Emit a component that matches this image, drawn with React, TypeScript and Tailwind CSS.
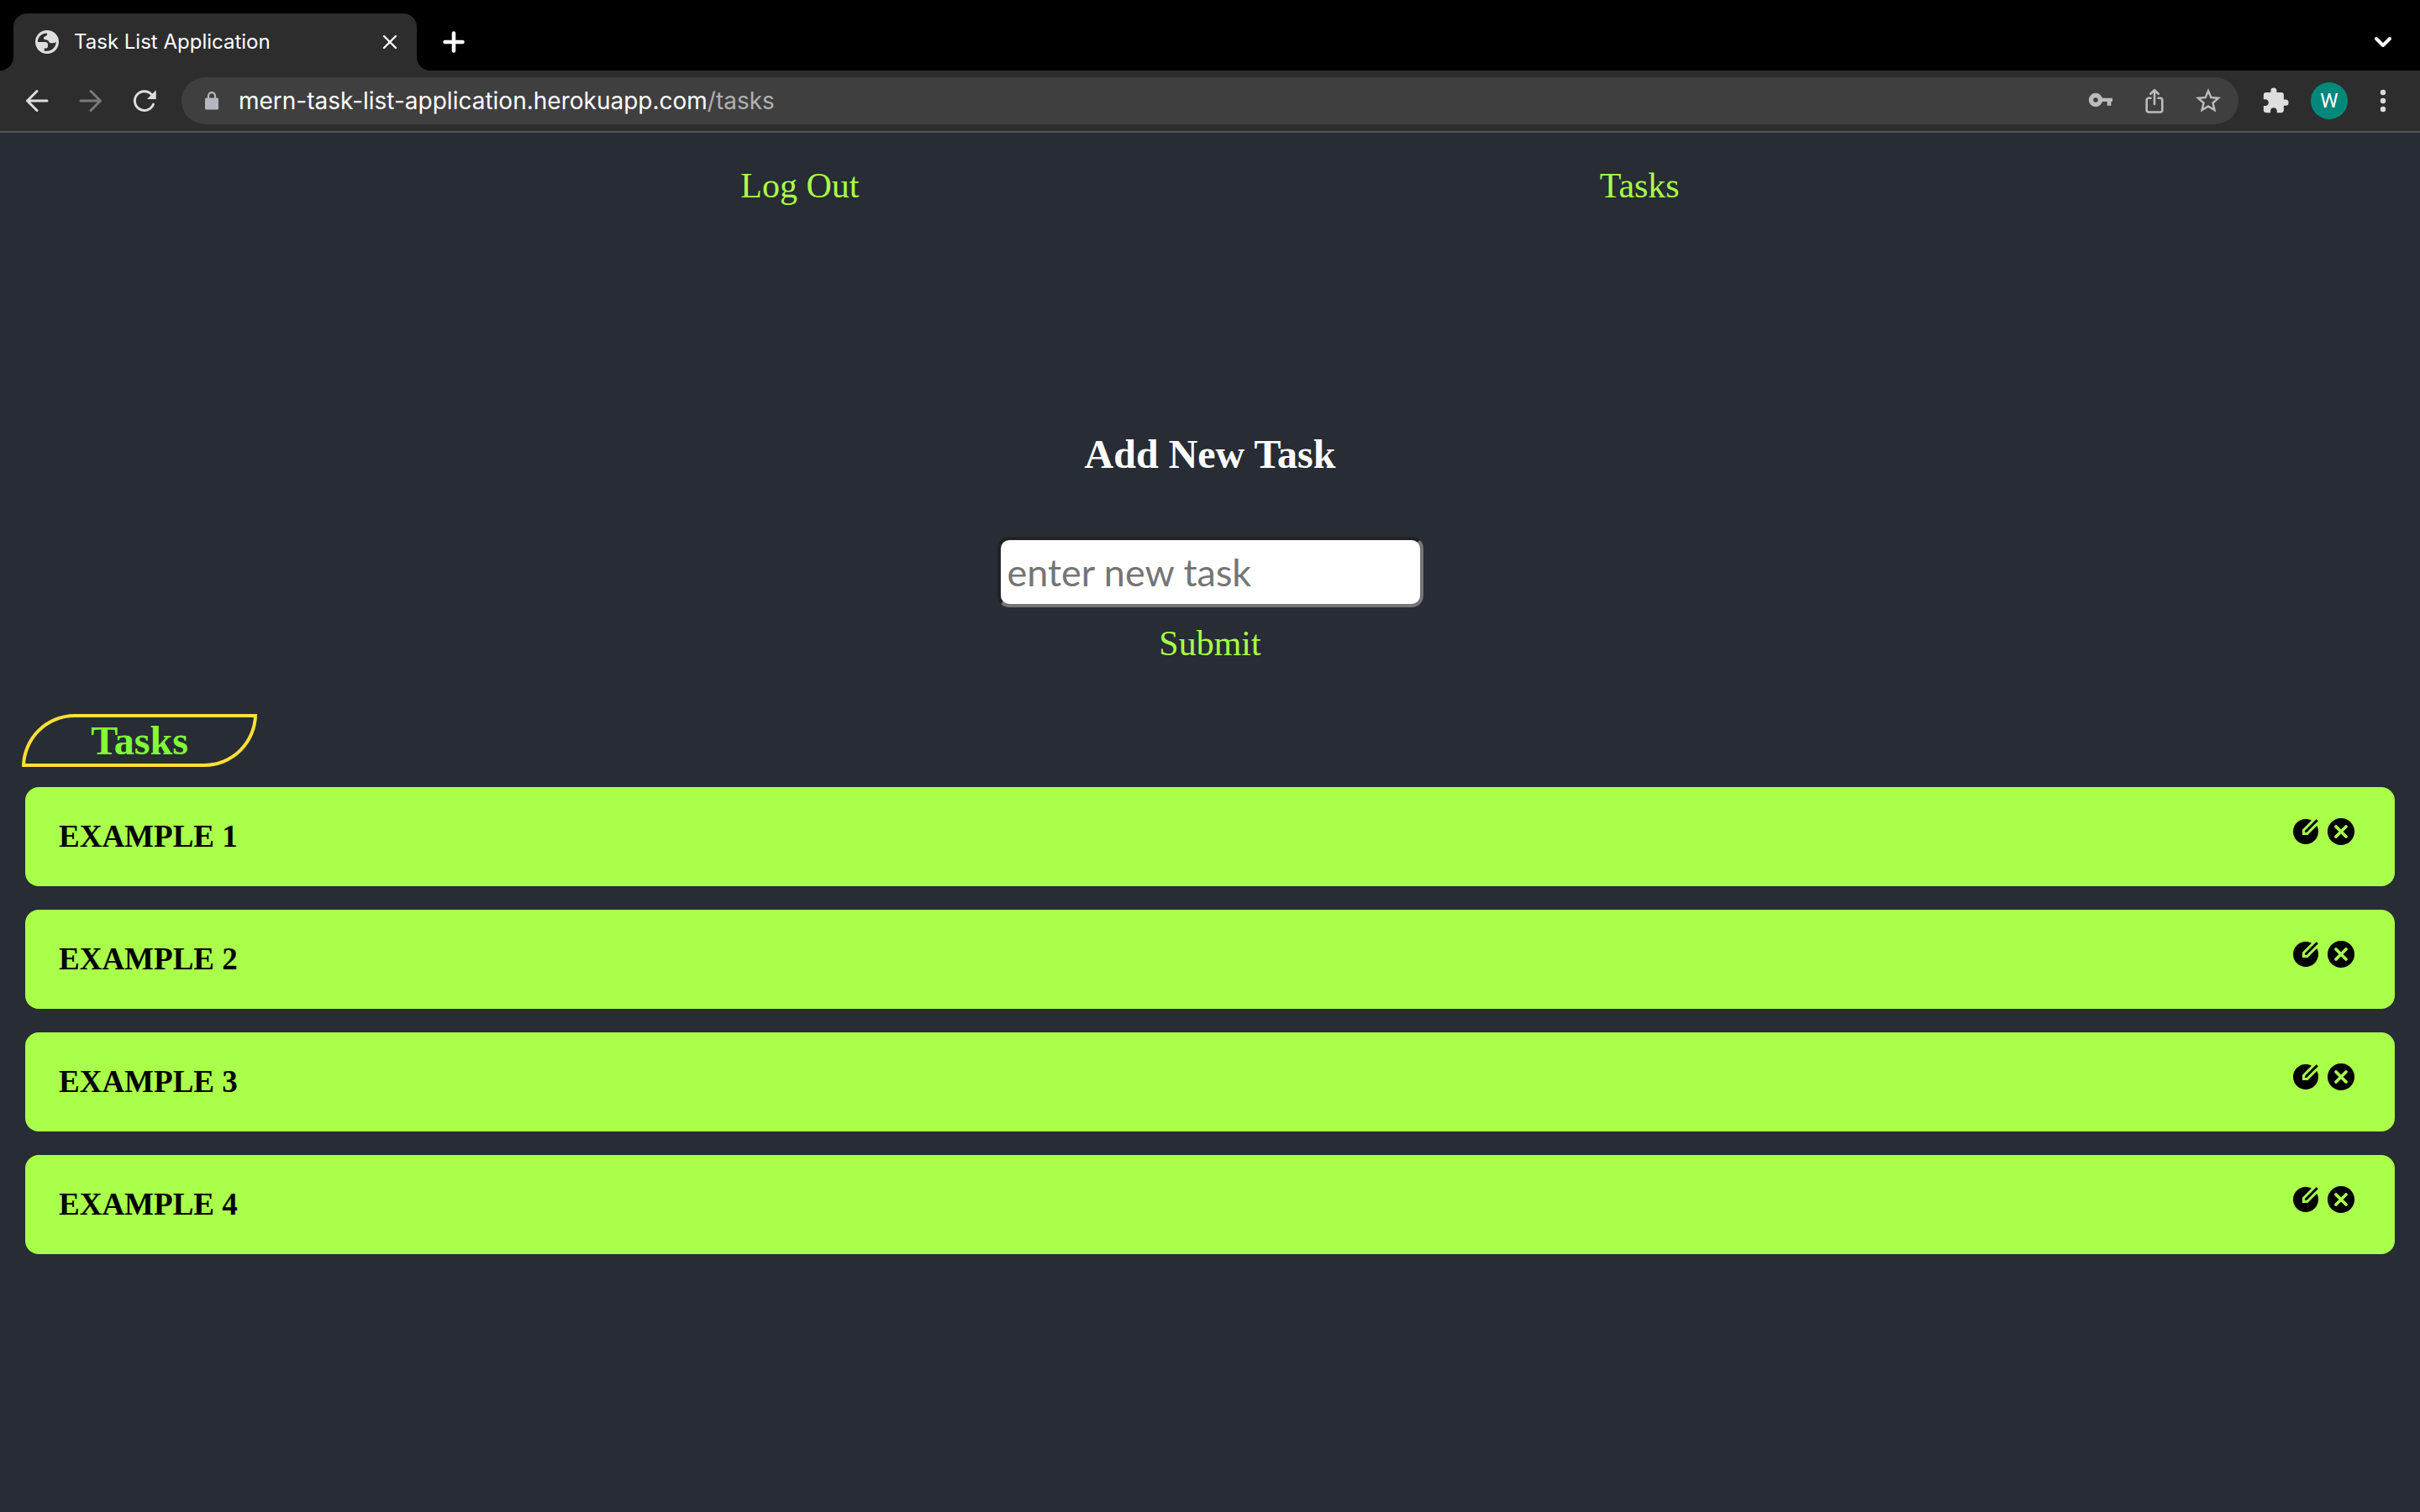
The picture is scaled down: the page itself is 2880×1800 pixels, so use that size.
import { useState, type ReactNode } from "react";
import { RiEditCircleFill } from "react-icons/ri";
import { MdStarBorder, MdExtension } from "react-icons/md";
import { X, Plus, ChevronDown } from "lucide-react";

const tasks = ["EXAMPLE 1", "EXAMPLE 2", "EXAMPLE 3", "EXAMPLE 4"];

function Glyph({ children }: { children: ReactNode }) {
  return (
    <svg
      viewBox="0 0 36 36"
      width={36}
      height={36}
      fill="none"
      stroke="currentColor"
      strokeWidth={3}
      strokeLinecap="round"
      strokeLinejoin="round"
      aria-hidden="true"
    >
      {children}
    </svg>
  );
}

function GlobeIcon() {
  return (
    <svg viewBox="0 0 28 28" width={28} height={28} aria-hidden="true">
      <circle cx="14" cy="14" r="14" fill="#dedede" />
      <path
        d="M3 14C2.8 8 7.500 3.400 14 3.400V5.500C13.500 7.300 10 7 10 9.500C10 11.500 13 11 15 12C16.500 13 16 15.300 19 15.300H21.500C23 15.300 23.500 14.300 24.700 14C24.500 20 20 24.700 14 24.700H10.700V21.500H12.500C15 21.500 15 19.500 15 17.500C15 15.500 14 14 12 14Z"
        fill="#2d2d2d"
      />
    </svg>
  );
}

function LockIcon() {
  return (
    <svg viewBox="0 0 16 22" width={16} height={22} className="text-[#b4b7bd]" aria-hidden="true">
      <rect x="0" y="7.500" width="16" height="14" rx="1.500" fill="currentColor" />
      <path d="M4 8.500V5.200a4 4 0 0 1 8 0V8.500" fill="none" stroke="currentColor" strokeWidth="2.200" />
    </svg>
  );
}

function CloseCircleIcon() {
  return (
    <svg viewBox="0 0 32 32" width={32} height={32} aria-hidden="true">
      <circle cx="16" cy="16" r="16" fill="currentColor" />
      <path d="M10 10 22 22M22 10 10 22" stroke="#aaff4a" strokeWidth="3.800" strokeLinecap="round" />
    </svg>
  );
}

function ToolButton({ label, children }: { label: string; children: ReactNode }) {
  return (
    <button aria-label={label} className="flex h-14 w-16 shrink-0 items-center justify-center">
      {children}
    </button>
  );
}

function TabStrip() {
  return (
    <div className="flex h-[84px] items-end bg-black pl-4 pr-6 text-white">
      <div className="relative flex h-[68px] w-[480px] items-center rounded-t-2xl bg-[#2d2d2d] pl-[26px] pr-4">
        <span className="absolute bottom-0 right-full size-4 bg-[#2d2d2d]">
          <span className="block size-4 rounded-br-2xl bg-black" />
        </span>
        <span className="absolute bottom-0 left-full size-4 bg-[#2d2d2d]">
          <span className="block size-4 rounded-bl-2xl bg-black" />
        </span>
        <GlobeIcon />
        <span className="ml-[18px] grow text-2xl">Task List Application</span>
        <button aria-label="Close tab" className="flex size-8 items-center justify-center">
          <X size={28} strokeWidth={2} />
        </button>
      </div>
      <button aria-label="New tab" className="ml-6 flex h-[68px] w-10 items-center justify-center">
        <Plus size={36} strokeWidth={3} />
      </button>
      <button aria-label="Search tabs" className="ml-auto flex h-[68px] w-10 items-center justify-center">
        <ChevronDown size={32} strokeWidth={3} />
      </button>
    </div>
  );
}

function Toolbar() {
  return (
    <div className="flex h-[74px] items-center border-b-2 border-[#565656] bg-[#2d2d2d] px-3 text-[#dedede]">
      <ToolButton label="Back">
        <Glyph>
          <path d="M30 18H6.500M18 6.500 6.500 18 18 29.500" />
        </Glyph>
      </ToolButton>
      <span className="text-[#7a7a7a]">
        <ToolButton label="Forward">
          <Glyph>
            <path d="M6 18H29.500M18 6.500 29.500 18 18 29.500" />
          </Glyph>
        </ToolButton>
      </span>
      <ToolButton label="Reload">
        <Glyph>
          <path d="M28.400 22.200A11.400 11.400 0 1 1 26.300 10.500" />
          <path d="M31.700 5.300V16H21Z" fill="currentColor" stroke="none" />
        </Glyph>
      </ToolButton>
      <div className="ml-3 flex h-14 grow items-center rounded-full bg-[#3f3f3f] pl-7 pr-1">
        <LockIcon />
        <span className="ml-6 grow text-[28px] text-[#b0b0b0]">
          <span className="text-white">mern-task-list-application.herokuapp.com</span>/tasks
        </span>
        <div className="flex items-center text-[#bcbcbc]">
          <ToolButton label="Passwords">
            <Glyph>
              <circle cx="12" cy="17" r="5.500" strokeWidth={5.4} />
              <path d="M18 14.700H32V23.700H25.700V19H18Z" fill="currentColor" stroke="none" />
              <path d="M30.400 19H32V24H30.400Z" fill="#3f3f3f" stroke="none" />
            </Glyph>
          </ToolButton>
          <ToolButton label="Share">
            <Glyph>
              <path
                d="M13.500 14.700H11.200a2.500 2.500 0 0 0-2.500 2.500V29a2.500 2.500 0 0 0 2.500 2.500H24.800a2.500 2.500 0 0 0 2.500-2.500V17.200a2.500 2.500 0 0 0-2.500-2.500H22.500"
                strokeWidth={2.6}
              />
              <path d="M18 5.500V22M13.300 9.800 18 5.200 22.700 9.800" strokeWidth={2.6} />
            </Glyph>
          </ToolButton>
          <ToolButton label="Bookmark">
            <MdStarBorder size={36} />
          </ToolButton>
        </div>
      </div>
      <div className="ml-3 flex">
        <ToolButton label="Extensions">
          <MdExtension size={34} />
        </ToolButton>
        <ToolButton label="Profile">
          <span className="flex size-11 items-center justify-center rounded-full bg-[#00897b] font-[Roboto,sans-serif] text-2xl text-white">
            W
          </span>
        </ToolButton>
        <ToolButton label="Menu">
          <Glyph>
            <g fill="currentColor" stroke="none">
              <circle cx="18" cy="8" r="3.200" />
              <circle cx="18" cy="18" r="3.200" />
              <circle cx="18" cy="28" r="3.200" />
            </g>
          </Glyph>
        </ToolButton>
      </div>
    </div>
  );
}

export default function App() {
  const [draft, setDraft] = useState("");
  return (
    <div className="min-h-screen bg-[#282c34] font-['Liberation_Serif',serif]">
      <header className="font-[Inter,sans-serif]">
        <TabStrip />
        <Toolbar />
      </header>
      <nav className="flex justify-evenly pt-[39px] text-[42px] leading-[48px] text-[#aaff4a]">
        <a href="#logout">Log Out</a>
        <a href="#tasks">Tasks</a>
      </nav>
      <main className="px-[30px]">
        <form className="flex flex-col items-center pt-[268px]" onSubmit={(e) => e.preventDefault()}>
          <label htmlFor="task" className="text-[48px] font-bold leading-[56px] text-white">
            Add New Task
          </label>
          <input
            id="task"
            value={draft}
            onChange={(e) => setDraft(e.target.value)}
            placeholder="enter new task"
            className="mt-[70px] h-[84px] w-[507px] rounded-[14px] border-4 border-[#222] border-b-[#767676] border-r-[#767676] bg-white px-2 font-[Lato,sans-serif] text-[45px] placeholder:text-[#757575]"
          />
          <button className="mt-[19px] text-[42px] leading-[48px] text-[#aaff4a]">Submit</button>
        </form>
        <h2
          id="tasks"
          className="-ml-1 mt-[60px] flex h-[63px] w-[280px] items-center justify-center rounded-br-[64px] rounded-tl-[64px] border-4 border-[#ffe135] text-[48px] font-bold text-[#80ff39]"
        >
          Tasks
        </h2>
        <ul className="mt-6 flex flex-col gap-7">
          {tasks.map((t) => (
            <li
              key={t}
              className="flex h-[118px] items-center justify-between rounded-2xl bg-[#aaff4a] pl-10 pr-12"
            >
              <span className="text-[37px] font-bold text-black">{t}</span>
              <div className="mb-3 flex items-center gap-2 text-black">
                <button aria-label={`Edit ${t}`}>
                  <RiEditCircleFill size={36} />
                </button>
                <button aria-label={`Delete ${t}`}>
                  <CloseCircleIcon />
                </button>
              </div>
            </li>
          ))}
        </ul>
      </main>
    </div>
  );
}
